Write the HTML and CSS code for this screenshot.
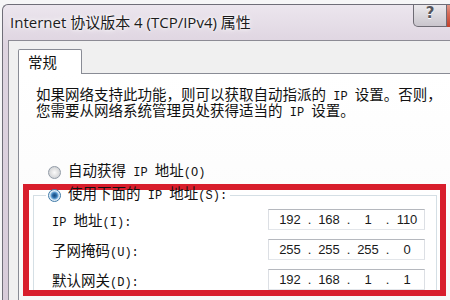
FILE: index.html
```html
<!DOCTYPE html>
<html lang="zh-CN">
<head>
    <meta charset="UTF-8">
    <title>Internet 协议版本 4 (TCP/IPv4) 属性</title>
    <link rel="stylesheet" href="styles.css">
</head>
<body>
    <div class="window">
        <!-- 标题栏 -->
        <div class="titlebar">
            <div class="title">Internet 协议版本 4 (TCP/IPv4) 属性</div>
            <div class="caption-buttons">
                <div class="btn-help">?</div>
                <div class="btn-close"></div>
            </div>
        </div>

        <div class="client">
            <div class="tabs">
                <div class="tab">常规</div>
                <div class="tab-fill"></div>
            </div>

            <div class="panel">
                <p class="intro">如果网络支持此功能，则可以获取自动指派的<span class="en"> IP </span>设置。否则，<br>您需要从网络系统管理员处获得适当的<span class="en"> IP </span>设置。</p>

                <div class="option">
                    <span class="radio"></span>
                    <span>自动获得<span class="en"> IP </span>地址<span class="en">(O)</span></span>
                </div>

                <!-- 红框标注 -->
                <div class="mark">
                    <fieldset class="group">
                        <legend class="option">
                            <span class="radio on"></span>
                            <span>使用下面的<span class="en"> IP </span>地址<span class="en">(S):</span></span>
                        </legend>

                        <div class="field">
                            <label><span class="en">IP </span>地址<span class="en">(I):</span></label>
                            <div class="ip">
                                <span class="seg">192</span><span class="dot">.</span>
                                <span class="seg">168</span><span class="dot">.</span>
                                <span class="seg">1</span><span class="dot">.</span>
                                <span class="seg">110</span>
                            </div>
                        </div>
                        <div class="field">
                            <label>子网掩码<span class="en">(U):</span></label>
                            <div class="ip">
                                <span class="seg">255</span><span class="dot">.</span>
                                <span class="seg">255</span><span class="dot">.</span>
                                <span class="seg">255</span><span class="dot">.</span>
                                <span class="seg">0</span>
                            </div>
                        </div>
                        <div class="field">
                            <label>默认网关<span class="en">(D):</span></label>
                            <div class="ip">
                                <span class="seg">192</span><span class="dot">.</span>
                                <span class="seg">168</span><span class="dot">.</span>
                                <span class="seg">1</span><span class="dot">.</span>
                                <span class="seg">1</span>
                            </div>
                        </div>
                    </fieldset>
                </div>
            </div>
        </div>
    </div>
</body>
</html>
```

FILE: styles.css
```css
html, body {
    height: 100%;
    overflow: hidden;
}
body {
    margin: 0;
    padding: 4px 0 0 2px;
    box-sizing: border-box;
    background-color: #f6f6f7;
    font-family: "Liberation Mono", "Noto Sans CJK SC", monospace;
    font-size: 14.5px;
    color: #111;
}
.en {
    font-size: 12px;
}
.window {
    display: flex;
    flex-direction: column;
    width: 448px;
    height: 296px;
    box-sizing: border-box;
    border: 1px solid #6f6e78;
    border-right: none;
    border-bottom: none;
    border-radius: 6px 0 0 0;
    background: linear-gradient(#ece6ee, #ded4e0 40px, #d8ccda);
    overflow: hidden;
}
.titlebar {
    display: flex;
    height: 35px;
    flex: none;
}
.title {
    flex: 1;
    padding: 7px 0 0 7px;
    font-family: "Open Sans", "Noto Sans CJK SC", sans-serif;
    font-size: 15px;
    line-height: 20px;
    color: #1c1c1c;
    text-shadow: 0 0 6px #fff, 0 0 3px #fff;
    white-space: nowrap;
}
.caption-buttons {
    display: flex;
    align-self: flex-start;
    margin-top: -5px;
}
.btn-help {
    width: 34px;
    height: 27px;
    box-sizing: border-box;
    border: 1px solid #6e6b74;
    border-top: none;
    border-radius: 0 0 0 5px;
    background: linear-gradient(#f4f2f5, #dedbe0 50%, #c9c5cc);
    font-family: "DejaVu Sans", sans-serif;
    font-weight: bold;
    font-size: 15px;
    line-height: 27px;
    text-align: center;
    color: #55555c;
    text-shadow: 0 1px 0 #fff;
}
.btn-close {
    width: 3px;
    height: 27px;
    background: linear-gradient(#eab0a4, #d66c58 50%, #c2402b);
}
.client {
    flex: 1;
    display: flex;
    flex-direction: column;
    min-height: 0;
    margin-left: 5px;
    padding: 8px 0 0 9px;
    border-top: 1px solid #8c8b94;
    border-left: 1px solid #8c8b94;
    background-color: #f0f0f0;
}
.tabs {
    display: flex;
}
.tab {
    width: 64px;
    height: 25px;
    box-sizing: border-box;
    padding-left: 9px;
    border: 1px solid #898c95;
    border-bottom: none;
    border-radius: 2px 2px 0 0;
    background-color: #fff;
    font-family: "Noto Sans CJK SC", sans-serif;
    line-height: 23px;
}
.tab-fill {
    flex: 1;
    border-bottom: 1px solid #898c95;
}
.panel {
    flex: 1;
    min-height: 0;
    padding-top: 15px;
    border-left: 1px solid #898c95;
    background: linear-gradient(#fff, #fcfcfc 60%, #f7f7f7);
    white-space: nowrap;
    overflow: hidden;
}
.intro {
    margin: 0 0 0 17px;
    line-height: 14.5px;
}
.option {
    display: flex;
    align-items: center;
    gap: 7px;
    height: 14px;
    margin: 45px 0 0 29px;
    line-height: 14px;
}
.radio {
    flex: none;
    width: 13px;
    height: 13px;
    box-sizing: border-box;
    border: 1px solid #929ba6;
    border-radius: 50%;
    background: radial-gradient(circle, #fbfbfb 0, #e6e6e6 3px, #cfd2d6 6px);
}
.radio.on {
    border-color: #3f7aa8;
    background: radial-gradient(circle, #1a4c7e 0, #2b6aa6 2px, #6fa9d8 3.5px, #d6e7f5 4.5px, #eef4fa 6px);
}
.mark {
    width: 423px;
    box-sizing: border-box;
    margin: 5px 0 0 4px;
    border: 6px solid #d81e2c;
    background-color: #fff;
}
.group {
    min-width: 0;
    margin: 0 3px 0 4px;
    padding: 9px 0 0 12px;
    border: 1px solid #d5dfe5;
    border-bottom: none;
}
.group legend.option {
    height: 10px;
    margin: 0;
    padding: 0 3px 0 2px;
    line-height: 10px;
}
.field {
    display: flex;
    align-items: center;
    height: 21px;
    margin: 0 0 9px 6px;
}
.field:last-child {
    margin-bottom: 0;
}
.field label {
    width: 216px;
}
.ip {
    display: flex;
    align-items: center;
    width: 157px;
    height: 21px;
    box-sizing: border-box;
    padding-left: 6px;
    border: 1px solid;
    border-color: #b5b8be #dcdfe4 #e3e6ea #dcdfe4;
    background-color: #fff;
    font-family: "Liberation Sans", Arial, sans-serif;
    font-size: 13px;
    color: #1a1a1a;
}
.seg {
    width: 30px;
    text-align: center;
}
.dot {
    width: 9px;
    text-align: center;
}
```
